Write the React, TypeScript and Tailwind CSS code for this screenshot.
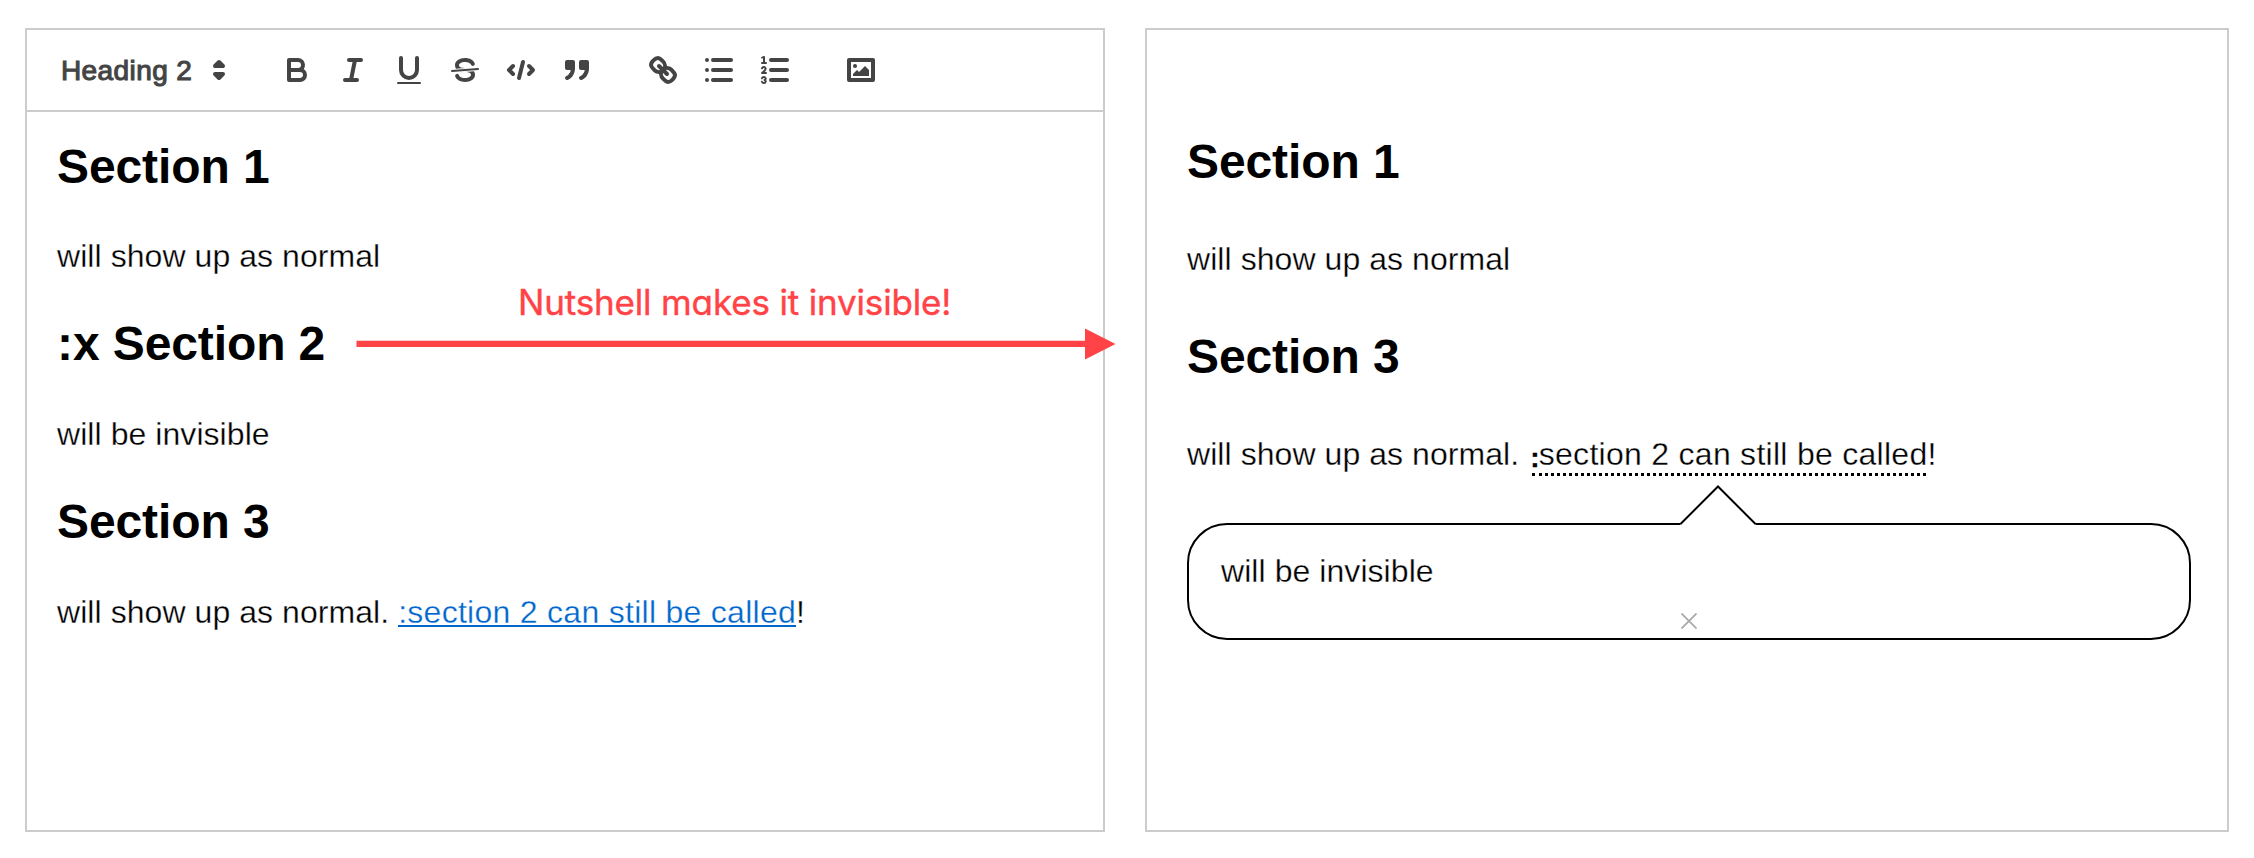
import type { ReactNode } from "react";

function Icon({ children }: { children: ReactNode }) {
  return (
    <button className="flex h-12 w-14 items-center justify-center">
      <svg
        viewBox="0 0 18 18"
        className="size-9"
        fill="none"
        stroke="#444"
        strokeWidth="2"
        strokeLinecap="round"
        strokeLinejoin="round"
      >
        {children}
      </svg>
    </button>
  );
}

function Toolbar() {
  return (
    <div className="flex h-[82px] items-center border-b-2 border-[#ccc] px-4">
      <div className="mr-[30px] flex h-12 w-[196px] items-center justify-between pl-[18px] text-[28px] text-[#444]">
        <span className="pt-[2px] tracking-[0.4px] [-webkit-text-stroke:1.1px_#444]">Heading 2</span>
        <svg
          viewBox="0 0 18 18"
          className="mr-[2px] size-9"
          fill="none"
          stroke="#444"
          strokeWidth="2"
          strokeLinecap="round"
          strokeLinejoin="round"
        >
          <polygon points="7 11 9 13 11 11 7 11" />
          <polygon points="7 7 9 5 11 7 7 7" />
        </svg>
      </div>
      <div className="mr-[30px] flex">
        <Icon>
          <path d="M5,4H9.5A2.5,2.5,0,0,1,12,6.5v0A2.5,2.5,0,0,1,9.5,9H5A0,0,0,0,1,5,9V4A0,0,0,0,1,5,4Z" />
          <path d="M5,9h5.5A2.5,2.5,0,0,1,13,11.5v0A2.5,2.5,0,0,1,10.5,14H5a0,0,0,0,1,0,0V9A0,0,0,0,1,5,9Z" />
        </Icon>
        <Icon>
          <line x1="7" x2="13" y1="4" y2="4" />
          <line x1="5" x2="11" y1="14" y2="14" />
          <line x1="8" x2="10" y1="14" y2="4" />
        </Icon>
        <Icon>
          <path d="M5,3V9a4.012,4.012,0,0,0,4,4H9a4.012,4.012,0,0,0,4-4V3" />
          <rect fill="#444" stroke="none" height="1" rx="0.5" ry="0.5" width="12" x="3" y="15" />
        </Icon>
        <Icon>
          <line strokeWidth="1" x1="15.5" x2="2.5" y1="8.5" y2="9.5" />
          <path
            fill="#444"
            stroke="none"
            d="M9.007,8C6.542,7.791,6,7.519,6,6.5,6,5.792,7.283,5,9,5c1.571,0,2.765.679,2.969,1.309a1,1,0,0,0,1.9-.617C13.356,4.106,11.354,3,9,3,6.2,3,4,4.538,4,6.5a3.2,3.2,0,0,0,.5,1.843Z"
          />
          <path
            fill="#444"
            stroke="none"
            d="M8.984,10C11.457,10.208,12,10.479,12,11.5c0,.708-1.283,1.5-3,1.5-1.571,0-2.765-.679-2.969-1.309a1,1,0,1,0-1.9.617C4.644,13.894,6.646,15,9,15c2.8,0,5-1.538,5-3.5a3.2,3.2,0,0,0-.5-1.843Z"
          />
        </Icon>
        <Icon>
          <polyline points="5 7 3 9 5 11" />
          <polyline points="13 7 15 9 13 11" />
          <line x1="10" x2="8" y1="5" y2="13" />
        </Icon>
        <Icon>
          <rect fill="#444" height="3" width="3" x="4" y="5" />
          <rect fill="#444" height="3" width="3" x="11" y="5" />
          <path fill="#444" d="M7,8c0,4.031-3,5-3,5" />
          <path fill="#444" d="M14,8c0,4.031-3,5-3,5" />
        </Icon>
      </div>
      <div className="mr-[30px] flex">
        <Icon>
          <line x1="7" x2="11" y1="7" y2="11" />
          <path d="M8.9,4.577a3.476,3.476,0,0,1,.36,4.679A3.476,3.476,0,0,1,4.577,8.9C3.185,7.5,2.035,6.4,4.217,4.217S7.5,3.185,8.9,4.577Z" />
          <path d="M13.423,9.1a3.476,3.476,0,0,0-4.679-.36,3.476,3.476,0,0,0,.36,4.679c1.392,1.392,2.5,2.542,4.679.36S14.815,10.5,13.423,9.1Z" />
        </Icon>
        <Icon>
          <line x1="6" x2="15" y1="4" y2="4" />
          <line x1="6" x2="15" y1="9" y2="9" />
          <line x1="6" x2="15" y1="14" y2="14" />
          <line x1="3" x2="3" y1="4" y2="4" />
          <line x1="3" x2="3" y1="9" y2="9" />
          <line x1="3" x2="3" y1="14" y2="14" />
        </Icon>
        <Icon>
          <line x1="7" x2="15" y1="4" y2="4" />
          <line x1="7" x2="15" y1="9" y2="9" />
          <line x1="7" x2="15" y1="14" y2="14" />
          <line strokeWidth="1" x1="2.5" x2="4.5" y1="5.5" y2="5.5" />
          <path
            fill="#444"
            stroke="none"
            d="M3.5,6A0.5,0.5,0,0,1,3,5.5V3.085l-0.276.138A0.5,0.5,0,0,1,2.053,3c-0.124-.247-0.023-0.324.224-0.447l1-.5A0.5,0.5,0,0,1,4,2.5v3A0.5,0.5,0,0,1,3.5,6Z"
          />
          <path strokeWidth="1" d="M4.5,10.5h-2c0-.234,1.85-1.076,1.85-2.234A0.959,0.959,0,0,0,2.5,8.156" />
          <path
            strokeWidth="1"
            d="M2.5,14.846a0.959,0.959,0,0,0,1.85-.109A0.7,0.7,0,0,0,3.75,14a0.688,0.688,0,0,0,.6-0.736,0.959,0.959,0,0,0-1.85-.109"
          />
        </Icon>
      </div>
      <Icon>
        <rect height="10" width="12" x="3" y="4" />
        <circle fill="#444" stroke="none" cx="6" cy="7" r="1" />
        <polyline fill="#444" stroke="none" points="5 12 5 11 7 9 8 10 11 7 13 9 13 12 5 12" />
      </Icon>
    </div>
  );
}

function Heading({ children }: { children: ReactNode }) {
  return <h2 className="text-[48px] leading-[64px] font-bold tracking-[-0.1px]">{children}</h2>;
}

function Text({ children }: { children: ReactNode }) {
  return (
    <p className="text-[32px] leading-[48px] tracking-[0.06px] [-webkit-text-stroke:0.3px_white]">
      {children}
    </p>
  );
}

function Editor() {
  return (
    <section className="w-[1080px] border-2 border-[#ccc]">
      <Toolbar />
      <div className="flex flex-col gap-8 px-[30px] pt-[23px]">
        <div className="flex flex-col gap-[33px]">
          <Heading>Section 1</Heading>
          <Text>will show up as normal</Text>
        </div>
        <div className="flex flex-col gap-[34px]">
          <Heading>:x Section 2</Heading>
          <Text>will be invisible</Text>
        </div>
        <div className="flex flex-col gap-[34px]">
          <Heading>Section 3</Heading>
          <Text>
            will show up as normal.{" "}
            <a className="bg-[linear-gradient(#06c,#06c)] bg-[length:100%_2px] bg-[position:0_31px] bg-no-repeat tracking-[0.28px] text-[#06c]">
              :section 2 can still be called
            </a>
            !
          </Text>
        </div>
      </div>
    </section>
  );
}

function Bubble() {
  return (
    <div className="relative mt-[45px] h-[117px] w-[1004px] rounded-[40px] border-2 border-black pt-[22px] pl-8">
      <svg viewBox="0 0 78 42" className="absolute top-[-41px] left-[490px] h-[42px] w-[78px]">
        <path d="M1.5 42V40L39 2.5L76.5 40V42Z" fill="white" />
        <path d="M1.5 40L39 2.5L76.5 40" fill="none" stroke="black" strokeWidth="2" />
      </svg>
      <Text>will be invisible</Text>
      <svg viewBox="0 0 16 16" className="absolute bottom-[9px] left-[492px] size-4">
        <path d="M0.5 0.5L15.5 15.5M15.5 0.5L0.5 15.5" stroke="#aaa" strokeWidth="1.8" />
      </svg>
    </div>
  );
}

function Preview() {
  return (
    <section className="w-[1084px] border-2 border-[#ccc] pt-[100px] pl-10">
      <div className="flex flex-col gap-[42px]">
        <div className="flex flex-col gap-[41px]">
          <Heading>Section 1</Heading>
          <Text>will show up as normal</Text>
        </div>
        <div className="flex flex-col gap-[41px]">
          <Heading>Section 3</Heading>
          <Text>
            will show up as normal.{" "}
            <a className="mr-[2px] ml-[4px] border-b-3 border-dotted border-black pb-px tracking-[0.28px]">
              <span className="relative top-[2px] left-px -ml-[3px] text-[28px] leading-none font-bold [-webkit-text-stroke:0.3px_black]">
                :
              </span>
              <span className="-mr-[2px]">section 2 can still be called</span>
            </a>
            !
          </Text>
        </div>
      </div>
      <Bubble />
    </section>
  );
}

function Annotation() {
  return (
    <div className="absolute top-[278px] left-[356px] flex w-[760px] flex-col gap-[2px] text-[#ff4346]">
      <span className="pl-[162px] font-[Inter] text-[35px] leading-[48px] font-normal tracking-[-0.16px] whitespace-nowrap [-webkit-text-stroke:0.4px_#ff4346] [font-feature-settings:'cv11']">
        Nutshell makes it invisible!
      </span>
      <svg viewBox="0 0 760 32" className="h-8 w-[760px]" fill="currentColor">
        <path d="M0.5 12.7H729V0.5L759.5 16L729 31.5V19H0.5Z" />
      </svg>
    </div>
  );
}

export default function App() {
  return (
    <main className="relative flex h-[858px] w-[2254px] gap-10 bg-white pt-7 pb-[26px] pl-[25px] font-['Liberation_Sans',Arial,sans-serif] text-black">
      <Editor />
      <Preview />
      <Annotation />
    </main>
  );
}
